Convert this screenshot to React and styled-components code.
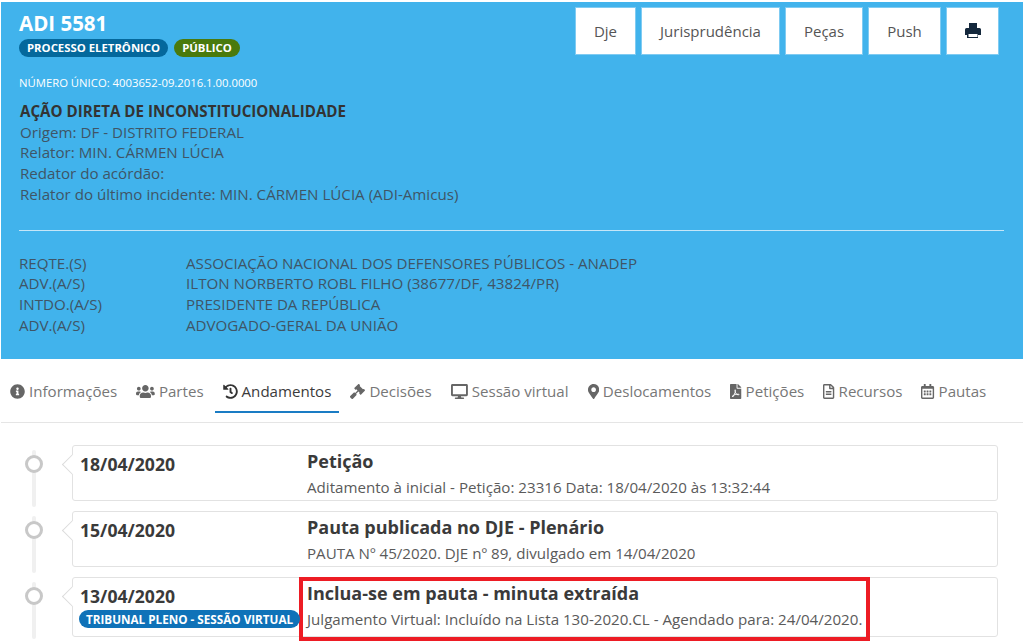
import React from "react";
import styled, { createGlobalStyle } from "styled-components";
import { FaInfoCircle, FaUsers, FaHistory, FaGavel, FaDesktop, FaMapMarkerAlt, FaFilePdf, FaRegFileAlt, FaRegCalendarAlt } from "react-icons/fa";

const Global = createGlobalStyle`
  html, body { margin: 0; padding: 0; background: #fff; overflow: hidden; }
  body { font-family: "Open Sans", "Liberation Sans", sans-serif; color: #555; }
`;
const Page = styled.div`
  position: relative; width: 1024px; height: 642px; overflow: hidden; box-sizing: border-box;
  padding: 2px 1px 0;
`;
const Header = styled.header`
  background: #41b3ec; height: 357px; box-sizing: border-box; padding: 10px 24px 0 18px;
  display: flex; flex-direction: column;
`;
const TopRow = styled.div`display: flex; justify-content: space-between; align-items: flex-start;`;
const Title = styled.h1`margin: 0; font-size: 20.5px; line-height: 22px; font-weight: 700; color: #fff;`;
const Badges = styled.div`display: flex; gap: 6px; margin-top: 5px;`;
const Badge = styled.span`
  background: ${p => p.$bg}; color: #fff; font-size: 11.35px; font-weight: 700; line-height: 18px; height: 18px;
  padding: 0 8px; border-radius: 9px; white-space: nowrap;
`;
const Actions = styled.div`display: flex; gap: 5px; margin-top: -5px;`;
const Action = styled.button`
  width: ${p => p.$w}px; height: 48px; background: #fff; border: 1px solid #7fcbf2; padding: 0; margin: 0;
  font: 400 15px "Open Sans", sans-serif; color: #555; display: flex; align-items: center; justify-content: center;
  svg { margin-bottom: 2px; }
`;
const Unique = styled.div`font-size: 11.3px; line-height: 14px; color: #fff; margin-top: 19px;`;
const Info = styled.div`margin-top: 11px; padding-left: 1px; font-size: 15.15px; line-height: 20.7px; color: #3f5566;`;
const InfoStrong = styled.div`font-weight: 700; color: #333;`;
const Rule = styled.hr`border: 0; border-top: 1px solid #c5e6f8; margin: 25px -5px 0 0;`;
const Parties = styled.div`
  margin-top: 22px; display: grid; grid-template-columns: 167px 1fr; font-size: 15.15px; line-height: 20.7px; color: #3f5566;
`;
const Tabs = styled.nav`
  height: 64px; box-sizing: border-box; border-bottom: 1px solid #e5e5e5; display: flex; align-items: flex-start;
  gap: 3px; padding-left: 1px;
`;
const Tab = styled.a`
  display: flex; align-items: center; gap: 4px; height: 54px; box-sizing: border-box; padding: 12px 8px 0;
  font-size: 15.1px; white-space: nowrap; color: ${p => p.$active ? "#3b3b3b" : "#777"};
  border-bottom: 2px solid ${p => p.$active ? "#1a7cc4" : "transparent"};
  svg { height: 15px; width: ${p => p.$iconWidth}px; color: ${p => p.$active ? "#333" : "#666"}; flex: none; }
`;
const Timeline = styled.section`padding: 22px 25px 0 24px; display: flex; flex-direction: column; gap: 10px;`;
const Row = styled.article`display: flex; align-items: flex-start;`;
const Rail = styled.div`width: 47px; flex: none; position: relative; align-self: stretch;`;
const Line = styled.span`
  position: absolute; left: 7px; top: 5px; width: 4px; height: 57px; background: #f0f0f0; border-radius: 2px;
`;
const Dot = styled.span`
  position: absolute; left: 0; top: 10px; width: 18px; height: 18px; box-sizing: border-box;
  border: 3px solid #c8c8c8; border-radius: 50%; background: #fff;
`;
const Card = styled.div`
  flex: 1; height: ${p => p.$h}px; box-sizing: border-box; border: 1px solid #e2e2e2; border-radius: 3px; background: #fff;
  position: relative; display: flex;
  &::before {
    content: ""; position: absolute; left: -8px; top: 11px; width: 14px; height: 14px; transform: rotate(45deg);
    background: #fff; border-left: 1px solid #dcdcdc; border-bottom: 1px solid #dcdcdc;
  }
`;
const DateCol = styled.div`width: 234px; flex: none; box-sizing: border-box; padding: 7px 0 0 7px; position: relative; z-index: 1;`;
const DateText = styled.div`font-size: 17.6px; line-height: 22px; font-weight: 700; color: #3a3a3a;`;
const Org = styled.span`
  display: inline-block; margin-top: 1px; margin-left: -1px; background: #0f72b8; color: #fff; font-size: 11.7px; font-weight: 700; line-height: 18px;
  height: 18px; padding: 0 7px; border-radius: 9px; white-space: nowrap;
`;
const Detail = styled.div`flex: 1; padding-top: 3px;`;
const DetailTitle = styled.div`font-size: 18px; line-height: 24px; font-weight: 700; color: #3a3a3a;`;
const DetailText = styled.div`font-size: 15.13px; line-height: 20px; margin-top: 4px; color: #5a5a5a; white-space: nowrap;`;
const Highlight = styled.div`
  position: absolute; left: 299px; top: 577px; width: 571px; height: 64px; box-sizing: border-box;
  border: 4px solid #ed1c24; pointer-events: none;
`;

const PrintIcon = () => (
  <svg width="16" height="15" viewBox="0 0 16 15" aria-hidden="true">
    <path fill="#14283c" fillRule="evenodd" d="M4 0h8v5h2.500a1.500 1.500 0 0 1 1.500 1.500V12h-3v3H2v-3H0V6.500A1.500 1.500 0 0 1 1.500 5H4zM3.500 11v3h9v-3z" />
  </svg>
);

const items = [
  { date: "18/04/2020", h: 56, title: "Petição", text: "Aditamento à inicial - Petição: 23316 Data: 18/04/2020 às 13:32:44" },
  { date: "15/04/2020", h: 56, title: "Pauta publicada no DJE - Plenário", text: "PAUTA Nº 45/2020. DJE nº 89, divulgado em 14/04/2020" },
  { date: "13/04/2020", h: 60, org: "TRIBUNAL PLENO - SESSÃO VIRTUAL", title: "Inclua-se em pauta - minuta extraída", text: "Julgamento Virtual: Incluído na Lista 130-2020.CL - Agendado para: 24/04/2020." },
];
const tabs = [
  { label: "Informações", Icon: FaInfoCircle, w: 15 },
  { label: "Partes", Icon: FaUsers, w: 18.75 },
  { label: "Andamentos", Icon: FaHistory, w: 15, active: true },
  { label: "Decisões", Icon: FaGavel, w: 15 },
  { label: "Sessão virtual", Icon: FaDesktop, w: 16.9 },
  { label: "Deslocamentos", Icon: FaMapMarkerAlt, w: 11.25 },
  { label: "Petições", Icon: FaFilePdf, w: 11.25 },
  { label: "Recursos", Icon: FaRegFileAlt, w: 11.25 },
  { label: "Pautas", Icon: FaRegCalendarAlt, w: 13.1 },
];
const parties = [
  ["REQTE.(S)", "ASSOCIAÇÃO NACIONAL DOS DEFENSORES PÚBLICOS - ANADEP"],
  ["ADV.(A/S)", "ILTON NORBERTO ROBL FILHO (38677/DF, 43824/PR)"],
  ["INTDO.(A/S)", "PRESIDENTE DA REPÚBLICA"],
  ["ADV.(A/S)", "ADVOGADO-GERAL DA UNIÃO"],
];

export default function App() {
  return (
    <Page>
      <Global />
      <Header>
        <TopRow>
          <div>
            <Title>ADI 5581</Title>
            <Badges><Badge $bg="#04689c">PROCESSO ELETRÔNICO</Badge><Badge $bg="#4a7a0c">PÚBLICO</Badge></Badges>
          </div>
          <Actions>
            <Action $w={61}>Dje</Action>
            <Action $w={139}>Jurisprudência</Action>
            <Action $w={78}>Peças</Action>
            <Action $w={73}>Push</Action>
            <Action $w={53} aria-label="Imprimir"><PrintIcon /></Action>
          </Actions>
        </TopRow>
        <Unique>NÚMERO ÚNICO: 4003652-09.2016.1.00.0000</Unique>
        <Info>
          <InfoStrong>AÇÃO DIRETA DE INCONSTITUCIONALIDADE</InfoStrong>
          <div>Origem: DF - DISTRITO FEDERAL</div>
          <div>Relator: MIN. CÁRMEN LÚCIA</div>
          <div>Redator do acórdão:</div>
          <div>Relator do último incidente: MIN. CÁRMEN LÚCIA (ADI-Amicus)</div>
        </Info>
        <Rule />
        <Parties>
          {parties.map(([k, v], i) => <React.Fragment key={i}><div>{k}</div><div>{v}</div></React.Fragment>)}
        </Parties>
      </Header>
      <Tabs>
        {tabs.map(({ label, Icon, w, active }) => (
          <Tab key={label} $active={active} $iconWidth={w}><Icon />{label}</Tab>
        ))}
      </Tabs>
      <Timeline>
        {items.map(it => (
          <Row key={it.date}>
            <Rail><Line /><Dot /></Rail>
            <Card $h={it.h}>
              <DateCol>
                <DateText>{it.date}</DateText>
                {it.org && <Org>{it.org}</Org>}
              </DateCol>
              <Detail>
                <DetailTitle>{it.title}</DetailTitle>
                <DetailText>{it.text}</DetailText>
              </Detail>
            </Card>
          </Row>
        ))}
      </Timeline>
      <Highlight />
    </Page>
  );
}
